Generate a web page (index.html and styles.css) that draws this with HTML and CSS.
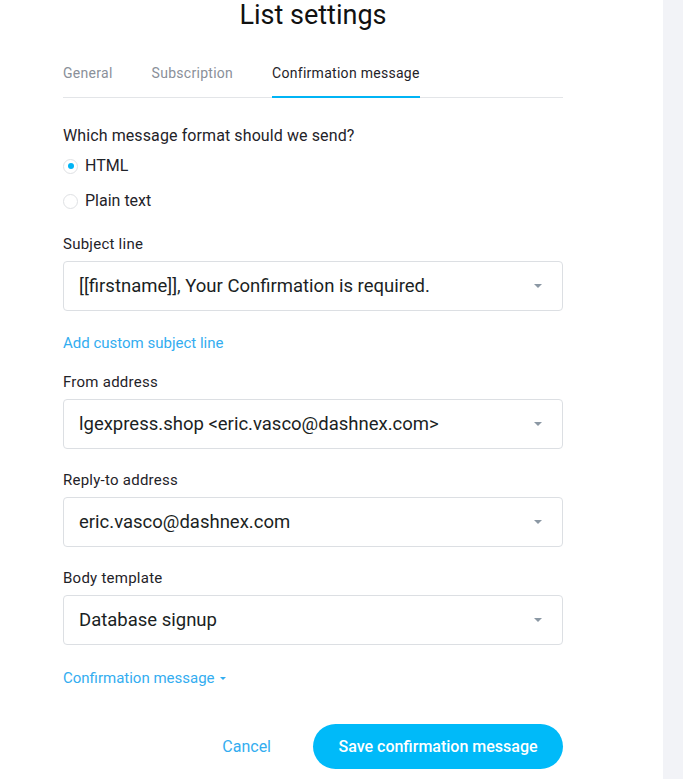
FILE: index.html
```html
<!DOCTYPE html>
<html lang="en">
<head>
<meta charset="utf-8">
<title>List settings</title>
<link rel="stylesheet" href="styles.css">
</head>
<body>
<div class="page">
  <main class="main">
    <div class="panel">
      <h1 class="title">List settings</h1>
      <nav class="tabs">
        <span class="tab">General</span>
        <span class="tab">Subscription</span>
        <span class="tab active">Confirmation message</span>
      </nav>

      <div class="question">Which message format should we send?</div>
      <div class="radios">
        <label class="radio"><span class="dot checked"></span>HTML</label>
        <label class="radio"><span class="dot"></span>Plain text</label>
      </div>

      <div class="field subject">
        <div class="label">Subject line</div>
        <div class="select"><span>[[firstname]], Your Confirmation is required.</span><span class="caret"></span></div>
      </div>
      <a class="link add-link">Add custom subject line</a>

      <div class="field from">
        <div class="label">From address</div>
        <div class="select"><span>lgexpress.shop &lt;eric.vasco@dashnex.com&gt;</span><span class="caret"></span></div>
      </div>

      <div class="field">
        <div class="label">Reply-to address</div>
        <div class="select"><span>eric.vasco@dashnex.com</span><span class="caret"></span></div>
      </div>

      <div class="field">
        <div class="label">Body template</div>
        <div class="select"><span>Database signup</span><span class="caret"></span></div>
      </div>

      <a class="link conf-link">Confirmation message <span class="small-caret"></span></a>

      <div class="actions">
        <a class="cancel">Cancel</a>
        <button class="save">Save confirmation message</button>
      </div>
    </div>
  </main>
  <aside class="side"></aside>
</div>
</body>
</html>
```

FILE: styles.css
```css
html, body {
  margin: 0;
  padding: 0;
  background: #ffffff;
}
body {
  font-family: Roboto, "Liberation Sans", Arial, sans-serif;
  color: #1f2329;
}
.page {
  display: flex;
  min-height: 779px;
}
.main {
  width: 663px;
  flex: none;
}
.side {
  flex: 1;
  background: #f2f3f7;
}
.panel {
  width: 500px;
  margin-left: 63px;
  display: flex;
  flex-direction: column;
}
.title {
  margin: 0;
  font-size: 27px;
  line-height: 30px;
  font-weight: 400;
  text-align: center;
  color: #111;
}
.tabs {
  margin-top: 33px;
  display: flex;
  border-bottom: 1px solid #e3e5e8;
}
.tab {
  font-size: 14px;
  line-height: 20px;
  letter-spacing: 0.28px;
  padding-bottom: 13px;
  color: #8a9099;
  margin-right: 39px;
  border-bottom: 2px solid transparent;
  margin-bottom: -1px;
}
.tab.active {
  color: #1f2329;
  border-bottom-color: #00b4f5;
}
.question {
  margin-top: 28px;
  font-size: 16px;
  line-height: 20px;
  letter-spacing: 0.1px;
  color: #1f2329;
}
.radios {
  display: flex;
  flex-direction: column;
  margin-top: 10px;
  gap: 15px;
}
.radio {
  display: flex;
  align-items: center;
  gap: 7px;
  font-size: 16px;
  line-height: 20px;
  color: #1f2329;
}
.dot {
  width: 13px;
  height: 13px;
  border: 1px solid #dfe1e4;
  border-radius: 50%;
  display: flex;
  align-items: center;
  justify-content: center;
  box-sizing: content-box;
}
.dot.checked::after {
  content: "";
  width: 6px;
  height: 6px;
  border-radius: 50%;
  background: #00b4f5;
}
.field {
  margin-top: 21px;
  display: flex;
  flex-direction: column;
}
.field.subject { margin-top: 23px; }
.field.from { margin-top: 19px; }
.label {
  font-size: 15px;
  line-height: 20px;
  letter-spacing: 0.25px;
  color: #1f2329;
  margin-bottom: 7px;
}
.select {
  height: 48px;
  border: 1px solid #dcdfe3;
  border-radius: 4px;
  display: flex;
  align-items: center;
  justify-content: space-between;
  padding: 0 20px 0 15px;
  font-size: 18.5px;
  color: #1b1f24;
}
.caret {
  width: 0;
  height: 0;
  border-left: 4px solid transparent;
  border-right: 4px solid transparent;
  border-top: 4px solid #8b98a4;
}
.link {
  font-size: 15px;
  line-height: 20px;
  color: #33adf0;
  text-decoration: none;
  align-self: flex-start;
}
.add-link { margin-top: 22px; }
.conf-link {
  margin-top: 23px;
  display: flex;
  align-items: center;
  gap: 5px;
}
.small-caret {
  width: 0;
  height: 0;
  border-left: 3px solid transparent;
  border-right: 3px solid transparent;
  border-top: 3px solid #33adf0;
  margin-top: 1px;
}
.actions {
  margin-top: 36px;
  display: flex;
  justify-content: flex-end;
  align-items: center;
}
.cancel {
  font-size: 16px;
  color: #33adf0;
  margin-right: 42px;
}
.save {
  width: 250px;
  height: 45px;
  border: none;
  border-radius: 23px;
  background: #00baf9;
  color: #ffffff;
  font-family: Roboto, "Liberation Sans", Arial, sans-serif;
  font-size: 16px;
  font-weight: 500;
  padding: 0;
}
```
